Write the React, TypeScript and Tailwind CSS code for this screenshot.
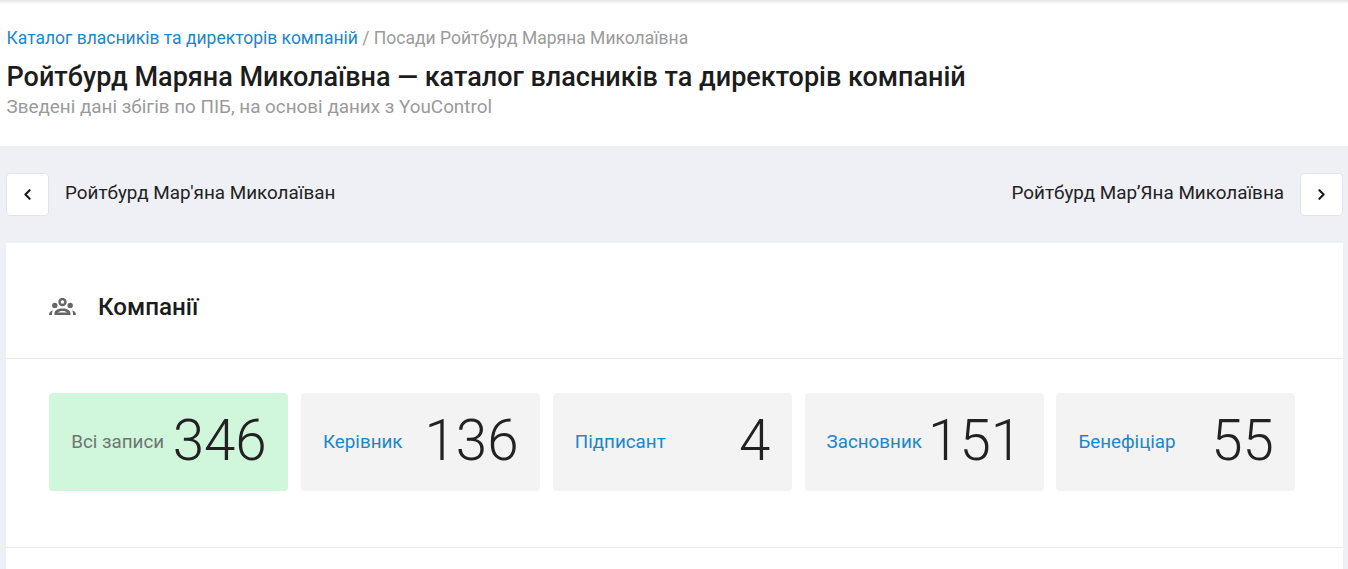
import { LuChevronLeft, LuChevronRight } from 'react-icons/lu';

const stats = [
  { label: 'Всі записи', value: '346', active: true },
  { label: 'Керівник', value: '136' },
  { label: 'Підписант', value: '4' },
  { label: 'Засновник', value: '151' },
  { label: 'Бенефіціар', value: '55' },
];

function GroupsIcon() {
  return (
    <svg width="28" height="18" viewBox="0 0 28 18" fill="#666">
      <circle cx="13.5" cy="4" r="3" fill="none" stroke="#666" strokeWidth="2.4" />
      <circle cx="5.8" cy="7.4" r="2.7" />
      <circle cx="21.2" cy="7.4" r="2.7" />
      <path
        fillRule="evenodd"
        d="M5.5 17v-1.800c0-2.800 3.600-4.700 8-4.700s8 1.900 8 4.700V17zm3.300-2.400h9.400c-.7-.9-2.500-1.500-4.700-1.500s-4 .6-4.700 1.500z"
      />
      <path d="M0 17c0-2.600 1.300-4.200 4-4.600-.7.900-1 1.800-1 2.800V17zM27 17c0-2.600-1.300-4.200-4-4.600.7.900 1 1.800 1 2.800V17z" />
    </svg>
  );
}

export default function App() {
  return (
    <div className="flex h-[569px] flex-col overflow-hidden bg-[#eff0f5] font-['Roboto',sans-serif]">
      <header className="h-[146px] shrink-0 bg-gradient-to-b from-[#e4e4e4] from-0% to-white to-[4px] px-[6.5px] pt-[27px]">
        <div className="text-[17.5px] leading-[22px] text-[#9a9a9a]">
          <a href="#" className="text-[#1c86c8]">Каталог власників та директорів компаній</a> / Посади Ройтбурд Маряна Миколаївна
        </div>
        <h1 className="mt-[11px] text-[27px] leading-[34px] font-medium text-[#1c1c1c]">
          Ройтбурд Маряна Миколаївна — каталог власників та директорів компаній
        </h1>
        <p className="mt-[2px] text-[18.85px] leading-[22px] text-[#9a9a9a]">
          Зведені дані збігів по ПІБ, на основі даних з YouControl
        </p>
      </header>

      <nav className="flex shrink-0 items-center justify-between py-[27px] pl-[6px] pr-[5px]">
        <div className="flex items-center gap-4">
          <button className="flex h-[43px] w-[43px] items-center justify-center rounded-[4px] border border-[#e2e3e8] bg-white text-[#1c1c1c]">
            <LuChevronLeft size={17} strokeWidth={3} />
          </button>
          <span className="pb-[2px] text-[18.85px] text-[#222]">Ройтбурд Мар'яна Миколаїван</span>
        </div>
        <div className="flex items-center gap-4">
          <span className="pb-[2px] text-[18.85px] text-[#222]">Ройтбурд Мар’Яна Миколаївна</span>
          <button className="flex h-[43px] w-[43px] items-center justify-center rounded-[4px] border border-[#e2e3e8] bg-white text-[#1c1c1c]">
            <LuChevronRight size={17} strokeWidth={3} />
          </button>
        </div>
      </nav>

      <section className="ml-[6px] mr-[5px] flex-1 bg-white">
        <div className="flex h-[116px] items-center gap-[21px] border-b border-[#e9e9ec] pl-[43px] pt-[13px]">
          <GroupsIcon />
          <h2 className="text-[24.2px] font-medium text-[#1c1c1c]">Компанії</h2>
        </div>
        <div className="grid grid-cols-5 gap-[12.8px] border-b border-[#e9e9ec] pb-[56px] pl-[43.2px] pr-[47.6px] pt-[34px]">
          {stats.map((s) => (
            <div
              key={s.label}
              className={`flex h-[98px] items-center justify-between rounded-[4px] pl-[22px] pr-[21.5px] ${s.active ? 'bg-[#d0f6dc]' : 'bg-[#f3f3f4]'}`}
            >
              {s.active ? (
                <span className="text-[18.8px] text-[#6e7570]">{s.label}</span>
              ) : (
                <a href="#" className="text-[18.8px] text-[#1c86c8]">{s.label}</a>
              )}
              <span className="pb-[2px] text-[56.5px] leading-none font-light text-[#222]">{s.value}</span>
            </div>
          ))}
        </div>
      </section>
    </div>
  );
}
